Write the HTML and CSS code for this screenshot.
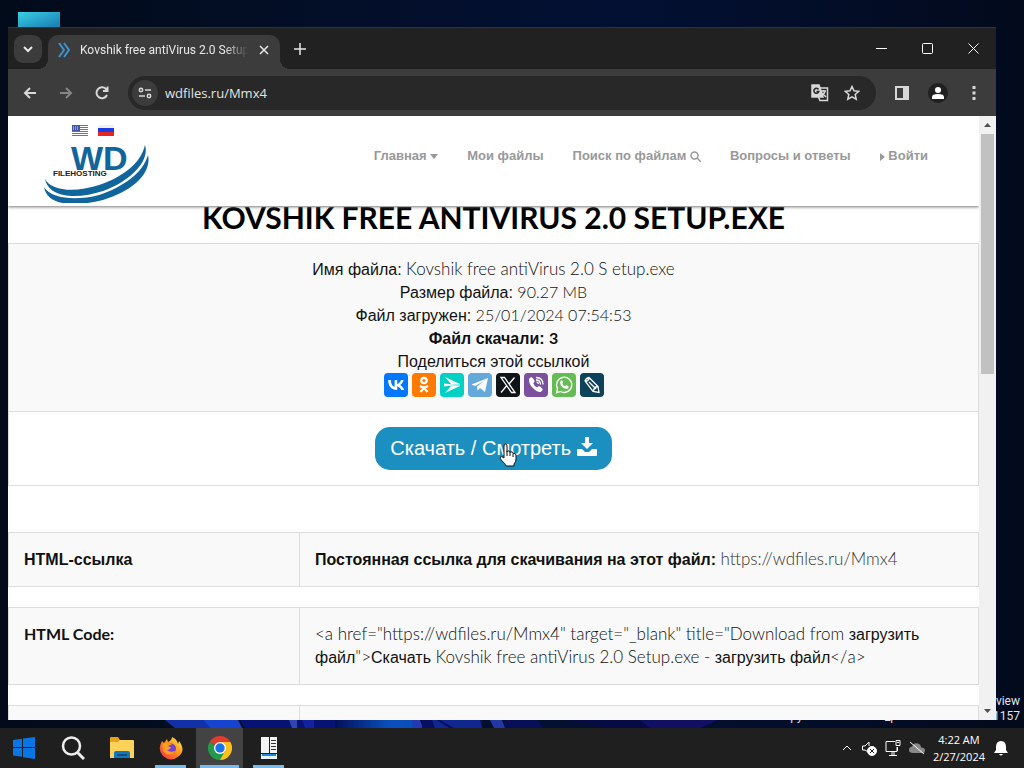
FILE: index.html
```html
<!DOCTYPE html>
<html lang="ru">
<head>
<meta charset="utf-8">
<title>Kovshik free antiVirus 2.0 Setup.exe</title>
<link rel="stylesheet" href="styles.css">
</head>
<body>
<div class="desktop">
  <div class="shortcut"></div>
  <svg class="wallpaper" viewBox="0 0 1024 8" preserveAspectRatio="none" aria-hidden="true">
    <defs><linearGradient id="bloom"><stop offset="0" stop-color="#041058"/><stop offset=".7" stop-color="#0a50bd"/><stop offset="1" stop-color="#0b4db8"/></linearGradient></defs>
    <path fill="#1230a8" d="M165 0h38l10 8h-38z"/><path fill="#1643cf" d="M203 0h35l4 8h-31z"/><path fill="#061372" d="M240 0h102v8H245z"/>
    <path fill="#3045b0" d="M289 0h8v8h-5z"/><path fill="#1222a0" d="M302 0h12v8h-9z"/>
    <path fill="url(#bloom)" d="M335 0h78v8h-78z"/><path fill="#2738b4" d="M412 0h8l3 8h-10z"/><path fill="#080f62" d="M422 0h60v8h-60z"/>
    <path fill="#10278f" d="M432 0h5l12 8h-14zM440 0h40l2 8h-28z"/><path fill="#2338a5" d="M490 0h12l3 8h-11z"/><path fill="#070f56" d="M504 0h33l7 8h-39z"/>
    <path fill="#070b45" d="M570 0h150l-20 8h-88z"/><path fill="#100f62" d="M640 0h78l-18 8h-50z"/>
  </svg>
  <p class="watermark">Insider Preview<br>Evaluation copy. Build 22579.rs_prerelease.220304-1157</p>

  <section class="window" aria-label="Browser">
    <div class="titlebar">
      <button class="tab-search" aria-label="Search tabs"><svg width="12" height="12" viewBox="0 0 12 12"><path d="M2 4l4 4 4-4"/></svg></button>
      <div class="tab">
        <svg class="favicon" width="14" height="16" viewBox="0 0 14 16"><path d="M2 1l5 7-5 7M7 1l5 7-5 7"/></svg>
        <span class="tab-title">Kovshik free antiVirus 2.0 Setup</span>
        <button class="tab-close" aria-label="Close tab"><svg width="10" height="10" viewBox="0 0 10 10"><path d="M1 1l8 8M9 1L1 9"/></svg></button>
      </div>
      <button class="new-tab" aria-label="New tab"><svg width="12" height="12" viewBox="0 0 12 12"><path d="M6 0v12M0 6h12"/></svg></button>
      <div class="caption">
        <button aria-label="Minimize"><svg width="11" height="11" viewBox="0 0 11 11"><path d="M0 5.5h11"/></svg></button>
        <button aria-label="Maximize"><svg width="11" height="11" viewBox="0 0 11 11"><rect x=".5" y=".5" width="10" height="10" rx="1"/></svg></button>
        <button aria-label="Close"><svg width="11" height="11" viewBox="0 0 11 11"><path d="M.5.5l10 10M10.5.5l-10 10"/></svg></button>
      </div>
    </div>

    <div class="toolbar">
      <div class="tools">
        <button aria-label="Back"><svg width="16" height="16" viewBox="0 0 16 16"><path d="M14 8H3M8 3L3 8l5 5"/></svg></button>
        <button class="dim" aria-label="Forward"><svg width="16" height="16" viewBox="0 0 16 16"><path d="M2 8h11M8 3l5 5-5 5"/></svg></button>
        <button aria-label="Reload"><svg width="16" height="16" viewBox="0 0 16 16"><path d="M13 10a5.500 5.500 0 1 1-1-6l1.500 1.500M13.500 1.500v4.500H9"/></svg></button>
      </div>
      <div class="omnibox">
        <button class="site-info" aria-label="Site information"><svg width="14" height="14" viewBox="0 0 14 14"><circle cx="3" cy="4" r="1.700"/><circle cx="11" cy="10" r="1.700"/><path d="M7 4h6M1 10h6"/></svg></button>
        <input type="text" aria-label="Address" value="wdfiles.ru/Mmx4">
        <button aria-label="Translate"><svg width="18" height="18" viewBox="0 0 18 18"><path d="M7 4h9.500v12.500H9L7 12z"/><path class="solid" d="M1 1h7l4 12H1z"/><path class="ink" d="M7.500 5.500a2.500 2.500 0 1 0 .3 2H5.500"/><path d="M10 7h5M12.500 6v1M14 7q-1 4-4 5M11 9l4 4"/></svg></button>
        <button aria-label="Bookmark"><svg width="16" height="16" viewBox="0 0 16 16"><path d="M8 1.500l2 4.300 4.800.5-3.600 3.200 1 4.700L8 11.800l-4.200 2.400 1-4.700L1.200 6.300 6 5.800z"/></svg></button>
      </div>
      <div class="tools">
        <button aria-label="Side panel"><svg width="16" height="16" viewBox="0 0 16 16"><path d="M2 2h12v12H2z"/><path class="solid" d="M10 2h4v12h-4z"/></svg></button>
        <button aria-label="Profile"><svg width="20" height="20" viewBox="0 0 20 20"><circle class="disc" cx="10" cy="10" r="10"/><circle class="white" cx="10" cy="7" r="3"/><path class="white" d="M4 16v-2q0-3 6-3t6 3v2z"/></svg></button>
        <button aria-label="Menu"><svg width="16" height="16" viewBox="0 0 16 16"><path class="solid nostroke" d="M6.500 1h3v3h-3zM6.500 6.500h3v3h-3zM6.500 12h3v3h-3z"/></svg></button>
      </div>
    </div>

    <div class="viewport">
      <div class="page">
        <header class="site-header">
          <a class="logo" href="#" aria-label="WD Filehosting">
            <svg width="110" height="84" viewBox="0 0 110 84">
              <rect x="29" y="6" width="16" height="11" fill="#fff"/><path stroke="#d34d50" d="M29 6.500h16M29 8.500h16M29 10.500h16M29 12.500h16M29 14.500h16M29 16.500h16"/><rect x="29" y="6" width="8" height="6" fill="#4355a5"/><path stroke="#d6daf0" stroke-dasharray="1 1" d="M30 8h6M30 10h6"/>
              <rect x="55" y="6" width="16" height="4" fill="#f1f1f5"/><rect x="55" y="9" width="16" height="5" fill="#1b3be0"/><rect x="55" y="13" width="16" height="4" fill="#e12627"/>
              <text class="logo-wd" x="28" y="51">WD</text>
              <text class="logo-sub" x="10" y="57">FILEHOSTING</text>
              <path fill="#10659c" d="M2 60C8 72 32 74 56 66c24-8 42-22 46-40 5 16-14 36-42 46C36 80 6 80 2 60zM1 68c7 12 33 14 55 8 24-8 44-22 49-40 4 18-15 36-45 45C32 88 4 87 1 68z"/>
            </svg>
          </a>
          <nav class="nav">
            <a href="#">Главная <svg width="8" height="5" viewBox="0 0 8 5"><path d="M0 0h8L4 5z"/></svg></a>
            <a href="#">Мои файлы</a>
            <a href="#">Поиск по файлам <svg width="11" height="11" viewBox="0 0 11 11"><g class="line"><circle cx="4.500" cy="4.500" r="3.500"/><path d="M7 7l4 4"/></g></svg></a>
            <a href="#">Вопросы и ответы</a>
            <a href="#"><svg width="5" height="8" viewBox="0 0 5 8"><path d="M0 0l5 4-5 4z"/></svg> Войти</a>
          </nav>
        </header>

        <main>
          <h1>KOVSHIK FREE ANTIVIRUS 2.0 SETUP.EXE</h1>
          <section class="info">
            <p>Имя файла: <span class="latin">Kovshik free antiVirus 2.0 S etup.exe</span></p>
            <p>Размер файла: <span class="latin figures">90.27 MB</span></p>
            <p>Файл загружен: <span class="latin figures">25/01/2024 07:54:53</span></p>
            <p><b>Файл скачали: <span class="latin">3</span></b></p>
            <p>Поделиться этой ссылкой</p>
            <div class="share">
              <a class="vk" href="#" aria-label="VK"><svg viewBox="0 0 24 24"><path d="M12.900 17C7.400 17 4.300 13.200 4.100 7h2.800c.1 4.500 2.100 6.400 3.700 6.800V7h2.600v3.900c1.600-.2 3.200-2 3.800-3.900h2.600c-.5 2.400-2.200 4.200-3.500 4.900 1.300.6 3.300 2.200 4.100 5.100h-2.900c-.6-1.900-2.200-3.400-4.100-3.600V17z"/></svg></a>
              <a class="ok" href="#" aria-label="Одноклассники"><svg viewBox="0 0 24 24"><g class="stroke thick"><circle cx="12" cy="7.500" r="2.700"/><path d="M8 13q4 2.500 8 0M12 14.500L8.500 19M12 14.500l3.500 4.500"/></g></svg></a>
              <a class="mm" href="#" aria-label="Мой Мир"><svg viewBox="0 0 24 24"><path d="M5 4l15 7H11zM4 10.500l7 .8 9 .2v1l-9 .2-7 .8zM5 20l6-7h9z"/></svg></a>
              <a class="tg" href="#" aria-label="Telegram"><svg viewBox="0 0 24 24"><path d="M3.500 11.500L20 5l-3 14-5-4-2.500 2.500-.5-4L16 8l-9 5z"/></svg></a>
              <a class="x" href="#" aria-label="X"><svg viewBox="0 0 24 24"><g class="stroke"><path d="M5 4.500h3.500L19 19.500h-3.500zM18.500 4.500L13 11M10.500 13L5 19.500"/></g></svg></a>
              <a class="vb" href="#" aria-label="Viber"><svg viewBox="0 0 24 24"><path d="M5 6q2-3 4-.5 3 3 .2 4.500.8 3 4 4.500 1.500-2.500 4.300.2 2.500 2-.5 4-2 1.200-6-1.700Q4.500 12 5 6z"/><g class="stroke"><path d="M12 4.500q7 0 7 7M12 7q4.500 0 4.500 4.500M12.500 9.200q1.800 0 1.800 1.800"/></g></svg></a>
              <a class="wa" href="#" aria-label="WhatsApp"><svg viewBox="0 0 24 24"><g class="stroke"><path d="M5.500 15.500a7.600 7.600 0 1 1 3 3L4.500 19.700z"/></g><path d="M8.500 8q1.500-1.500 2.200.3.900 1.800-.3 2.500.8 2 2.800 2.500 1-1.600 2-.8l1.500.9q0 2-2 2.500-3 .2-5.700-3.200Q7.500 9.700 8.500 8z"/></svg></a>
              <a class="lj" href="#" aria-label="LiveJournal"><svg viewBox="0 0 24 24"><g class="stroke"><path d="M5 8q1-3 4-3.500l9 9 1 6-6-1zM5.500 8.500q3-.5 4-4M9 9l7 7M13.500 18q.5-4 4-4.500"/></g></svg></a>
            </div>
          </section>
          <section class="action">
            <a class="download" href="#">Скачать / Смотреть <svg width="20" height="19" viewBox="0 0 20 19"><path d="M8 0h4v6h4l-6 6-6-6h4zM1 12h4l3 3h4l3-3h4q1 0 1 1v5q0 1-1 1H1q-1 0-1-1v-5q0-1 1-1z"/></svg>
              <svg class="cursor" width="18" height="24" viewBox="0 0 18 24"><path d="M5 15V3q0-2 1.500-2T8 3v6q.5-1.500 2-1t1 1.500q.5-1 2-.5t1 1.500q2.500-.8 3 1.500v4q0 3-2 5v2H7q-1-3-4-5-2.500-2.500-1.500-4T5 15z"/><path d="M8 8v5M11 9v4M14 11v3"/></svg>
            </a>
          </section>
          <div class="links">
            <table><tr><th>HTML-ссылка</th><td><b>Постоянная ссылка для скачивания на этот файл:</b> <a class="latin" href="#">https://wdfiles.ru/Mmx4</a></td></tr></table>
            <table><tr><th><span class="latin">HTML Code:</span></th><td><span class="latin">&lt;a href="https://wdfiles.ru/Mmx4" target="_blank" title="Download from</span> загрузить файл<span class="latin">"&gt;</span>Скачать <span class="latin">Kovshik free antiVirus 2.0 Setup.exe -</span> загрузить файл<span class="latin">&lt;/a&gt;</span></td></tr></table>
            <table><tr><th>&nbsp;</th><td>&nbsp;</td></tr></table>
          </div>
        </main>
      </div>
      <div class="scrollbar" aria-hidden="true">
        <svg width="17" height="18" viewBox="0 0 17 18"><path d="M5 11h7L8.500 7z"/></svg>
        <div class="thumb"></div>
        <svg width="17" height="18" viewBox="0 0 17 18"><path d="M5 7h7l-3.500 4z"/></svg>
      </div>
    </div>
  </section>
</div>

<footer class="taskbar">
  <button aria-label="Start"><svg width="24" height="24" viewBox="0 0 24 24"><path fill="#0876e4" d="M1 4l9-1.300V11H1zM11 2.500L23 1v10H11zM1 12h9v8.800L1 19.500zM11 12h12v11l-12-1.700z"/></svg></button>
  <button aria-label="Search"><svg width="24" height="24" viewBox="0 0 24 24" fill="none" stroke="#eee" stroke-width="2.500"><circle cx="10.500" cy="10" r="8.500"/><path stroke-width="3" d="M16.500 16.500L23 23"/></svg></button>
  <button aria-label="File Explorer"><svg width="26" height="24" viewBox="0 0 26 24"><path fill="#e8a317" d="M1 2q0-1 1-1h7l2 3h13v8H1z"/><path fill="#ffd25b" d="M1 6h8l2-2h13q1 0 1 1v17H1z"/><path fill="#1677b8" d="M5 22v-5q0-2 2-2h12q2 0 2 2v5z"/><path fill="#0c4f86" d="M8 18h10v2H8z"/></svg></button>
  <button class="running" aria-label="Firefox"><svg width="24" height="24" viewBox="0 0 24 24"><defs><linearGradient id="fox" x1="1" x2="0" y2="1"><stop stop-color="#fff44f"/><stop offset=".5" stop-color="#ff8a16"/><stop offset="1" stop-color="#f0215f"/></linearGradient></defs><path fill="url(#fox)" d="M3 5l2 2 3-4 1 3q4-2 4-5 5 2 6 7l1-3q7 9 0 15-8 7-16 0-6-6-1-15z"/><circle cx="12" cy="12.500" r="5" fill="#7541d3"/><path fill="#ff9b22" d="M4 8q5-3 9 1-3-.5-4 1 1 1 3 1-1 3-4 3 3 3 8 1-3 5-9 3-5-3-3-10z"/></svg></button>
  <button class="running active" aria-label="Chrome"><svg width="24" height="24" viewBox="0 0 24 24"><path fill="#e33b2e" d="M12 12L1.600 6a12 12 0 0 1 20.800 0z"/><path fill="#fbc116" d="M12 12V6h10.400A12 12 0 0 1 12 24z"/><path fill="#229a49" d="M12 12l5 3-5 9A12 12 0 0 1 1.600 6z"/><circle cx="12" cy="12" r="6" fill="#fff"/><circle cx="12" cy="12" r="4.700" fill="#1a73e8"/></svg></button>
  <button class="running" aria-label="Server Manager"><svg width="18" height="24" viewBox="0 0 18 24"><path fill="#f4f4f4" d="M1 1h8v16H1zM10 1h7v16h-7z"/><path stroke="#333" d="M11 4.500h5M11 7.500h5M11 10.500h5M11 13.500h5"/><path fill="#e9f6ff" d="M1 18h16v5H1z"/><path fill="#168de0" d="M2 18h14v2H2z"/></svg></button>
  <div class="tray">
    <svg width="12" height="12" viewBox="0 0 12 12"><path d="M2 8l4-4 4 4"/></svg>
    <svg width="16" height="16" viewBox="0 0 16 16"><path d="M7 12L4 10H1.500V6H4l4-4v4"/><circle cx="11" cy="11" r="4.500" fill="#fff"/><path stroke="#222" d="M9 9l4 4M13 9l-4 4"/></svg>
    <svg width="16" height="18" viewBox="0 0 16 18"><path d="M10 2.500H1v10h11V8M4 16.500h8M7 13v3M9 13v3M12.500 8v4M11 1.500h4v5h-4zM12 3.500h2"/></svg>
    <svg width="16" height="16" viewBox="0 0 16 16"><path fill="#888" stroke="none" d="M4 13q-4 0-4-3t3-3.500Q5 2 9 3.500q3 1 3 4 4 0 4 3t-3 2.500z"/><path d="M1 2l14 12"/></svg>
    <time>4:22 AM<br>2/27/2024</time>
    <svg width="16" height="18" viewBox="0 0 16 18"><path fill="#fff" stroke="none" d="M3 8q0-6 5-6t5 6v3l2 3H1l2-3zM6 15h4q-2 3-4 0z"/></svg>
  </div>
</footer>
</body>
</html>
```

FILE: styles.css
```css
* { box-sizing: border-box; }
body {
  margin: 0;
  height: 100vh;
  display: flex;
  flex-direction: column;
  overflow: hidden;
  background: #020b1d;
  font-family: "Liberation Sans", Arial, sans-serif;
}
button { border: 0; padding: 0; background: none; color: inherit; font: inherit; }
svg { flex: none; }

/* Desktop */
.desktop {
  position: relative;
  flex: 1;
  min-height: 0;
  display: flex;
  padding: 28px 28px 8px 8px;
  background: linear-gradient(90deg, #020b1a, #031033 60%, #020a1c);
}
.shortcut {
  position: absolute;
  left: 18px;
  top: 12px;
  width: 42px;
  height: 30px;
  background: linear-gradient(160deg, #3bd0e2, #1b83b8 60%);
}
.wallpaper { position: absolute; left: 0; bottom: 0; width: 100%; height: 8px; }
.watermark {
  position: absolute;
  right: 4px;
  bottom: 4px;
  margin: 0;
  color: #dfe4ee;
  font: 12px/15px Roboto, sans-serif;
  text-align: right;
  white-space: nowrap;
}

/* Browser window */
.window {
  position: relative;
  flex: 1;
  min-width: 0;
  display: flex;
  flex-direction: column;
  background: #fff;
}
.titlebar { display: flex; height: 41px; padding-left: 6px; background: #202120; color: #e8e8e8; box-shadow: 0 -1px #303236; }
.titlebar svg, .toolbar svg { fill: none; stroke: currentColor; stroke-width: 2; }
.titlebar .tab-close svg, .titlebar .new-tab svg { stroke-width: 1.5; }
.tab-search {
  width: 28px;
  height: 28px;
  margin-top: 7px;
  display: grid;
  place-items: center;
  border-radius: 9px;
  background: #3c3c3c;
}
.tab {
  position: relative;
  display: flex;
  align-items: center;
  gap: 9px;
  width: 232px;
  height: 34px;
  margin: 7px 0 0 6px;
  padding: 0 9px 5px;
  border-radius: 10px 10px 0 0;
  background: #3c3c3c;
}
.tab::before, .tab::after {
  content: "";
  position: absolute;
  bottom: 0;
  width: 10px;
  height: 10px;
}
.tab::before { left: -10px; background: radial-gradient(circle at 0 0, transparent 10px, #3c3c3c 10px); }
.tab::after { right: -10px; background: radial-gradient(circle at 100% 0, transparent 10px, #3c3c3c 10px); }
.tab .favicon { stroke: #3c94cf; }
.tab-title {
  flex: 1;
  overflow: hidden;
  white-space: nowrap;
  font: 12px/18px Roboto, sans-serif;
  -webkit-mask-image: linear-gradient(90deg, #000 86%, transparent);
  mask-image: linear-gradient(90deg, #000 86%, transparent);
}
.tab-close { display: grid; place-items: center; width: 14px; height: 14px; }
.new-tab { display: grid; place-items: center; width: 28px; height: 28px; margin: 7px 0 0 6px; }
.caption { display: flex; margin-left: auto; }
.caption button { width: 46px; height: 40px; display: grid; place-items: center; color: #fff; }
.titlebar .caption svg { stroke-width: 1; }
.toolbar {
  display: flex;
  align-items: center;
  gap: 8px;
  height: 47px;
  padding: 0 4px;
  background: #3c3c3c;
  color: #d8d8d8;
}
.tools { display: flex; }
.tools button { width: 36px; height: 36px; display: grid; place-items: center; }
.tools .dim { color: #858585; }
.toolbar .solid { fill: currentColor; }
.toolbar .nostroke { stroke: none; }
.toolbar .disc { fill: #202020; stroke: none; }
.toolbar .white { fill: #fff; stroke: none; }
.omnibox {
  flex: 1;
  display: flex;
  align-items: center;
  height: 34px;
  padding: 0 8px 0 4px;
  border-radius: 17px;
  background: #282828;
}
.omnibox button { width: 32px; height: 26px; display: grid; place-items: center; }
.omnibox svg { stroke-width: 1.5; }
.omnibox .ink { stroke: #282828; }
.omnibox .site-info { width: 26px; border-radius: 13px; background: #3c3c3c; }
.omnibox input {
  flex: 1;
  min-width: 0;
  padding: 0 7px;
  border: 0;
  outline: 0;
  background: none;
  color: #e3e3e3;
  font: 13px/20px "Open Sans", sans-serif;
}

/* Web page */
.viewport { flex: 1; min-height: 0; display: flex; }
.page { flex: 1; min-width: 0; overflow: hidden; color: #111; font-size: 16px; line-height: 23px; }
.site-header {
  position: relative;
  display: flex;
  align-items: center;
  height: 90px;
  padding: 0 51px 0 35px;
  background: #fff;
  box-shadow: 0 1px 3px #777;
}
.logo svg { display: block; }
.logo-wd { fill: #10659c; font: bold 34px "Liberation Sans", sans-serif; }
.logo-sub { fill: #222; font: bold 8px "Liberation Sans", sans-serif; }
.nav { display: flex; gap: 29px; margin: 0 0 11px auto; white-space: nowrap; }
.nav a { color: #999; font-size: 13px; font-weight: bold; text-decoration: none; }
.nav svg { fill: currentColor; vertical-align: middle; }
.nav .line { fill: none; stroke: currentColor; stroke-width: 1.5; }
h1 {
  margin: -7px 0 0;
  height: 44px;
  color: #000;
  font: bold 30px/36px Lato, sans-serif;
  text-align: center;
}
.latin { font-family: Lato, sans-serif; font-weight: 300; font-size: 17px; line-height: 16px; }
.figures, b .latin, th .latin { font-size: 16px; }
b .latin, th .latin { font-weight: bold; }
.info, .action { text-align: center; border: 1px solid #ddd; }
.info { padding: 14px 16px; background: #f9f9f9; }
.info p { margin: 0; }
.share { display: flex; justify-content: center; gap: 4px; }
.share a { width: 24px; height: 24px; border-radius: 4px; }
.share svg { display: block; fill: #fff; }
.share .stroke { fill: none; stroke: #fff; stroke-width: 1.3; }
.share .thick { stroke-width: 2.2; }
.vk { background: #07f; }
.ok { background: #ff7a00; }
.mm { background: #00d1c5; }
.tg { background: #64a9dc; }
.x { background: #0f1419; }
.vb { background: #7b519d; }
.wa { background: #65bc54; }
.lj { background: #0d425a; }
.action { padding: 15px; border-top: 0; }
.download {
  position: relative;
  display: inline-block;
  padding: 10px 15px;
  border-radius: 15px;
  background: #1b8fc0;
  color: #fff;
  font-size: 20px;
  line-height: 23px;
  text-decoration: none;
  vertical-align: top;
}
.download svg { fill: #fff; vertical-align: -1px; }
.download .cursor { position: absolute; left: 124px; top: 16px; stroke: #111; }
.links { display: flex; flex-direction: column; gap: 20px; padding-top: 46px; }
table { width: 100%; border-collapse: collapse; table-layout: fixed; background: #f9f9f9; }
th, td { padding: 15px; border: 1px solid #ddd; text-align: left; vertical-align: top; }
th { width: 30%; }
td a { color: #333; text-decoration: none; }
.scrollbar { display: flex; flex-direction: column; width: 17px; background: #f1f1f1; }
.scrollbar svg { fill: #505050; }
.scrollbar .thumb { height: 240px; margin: 0 2px auto; background: #c1c1c1; }

/* Taskbar */
.taskbar { display: flex; height: 40px; background: #1f1f1f; color: #fff; }
.taskbar button { position: relative; width: 47px; margin-right: 2px; display: grid; place-items: center; }
.taskbar .active { background: #434343; }
.running::after {
  content: "";
  position: absolute;
  left: 8px;
  right: 8px;
  bottom: 0;
  height: 3px;
  background: #76b9ed;
}
.active::after { left: 4px; right: 4px; }
.tray { display: flex; align-items: center; gap: 8px; margin-left: auto; padding-right: 15px; }
.tray svg { fill: none; stroke: #fff; }
.tray time { font: 11px/17px "Open Sans", sans-serif; text-align: center; }
```
